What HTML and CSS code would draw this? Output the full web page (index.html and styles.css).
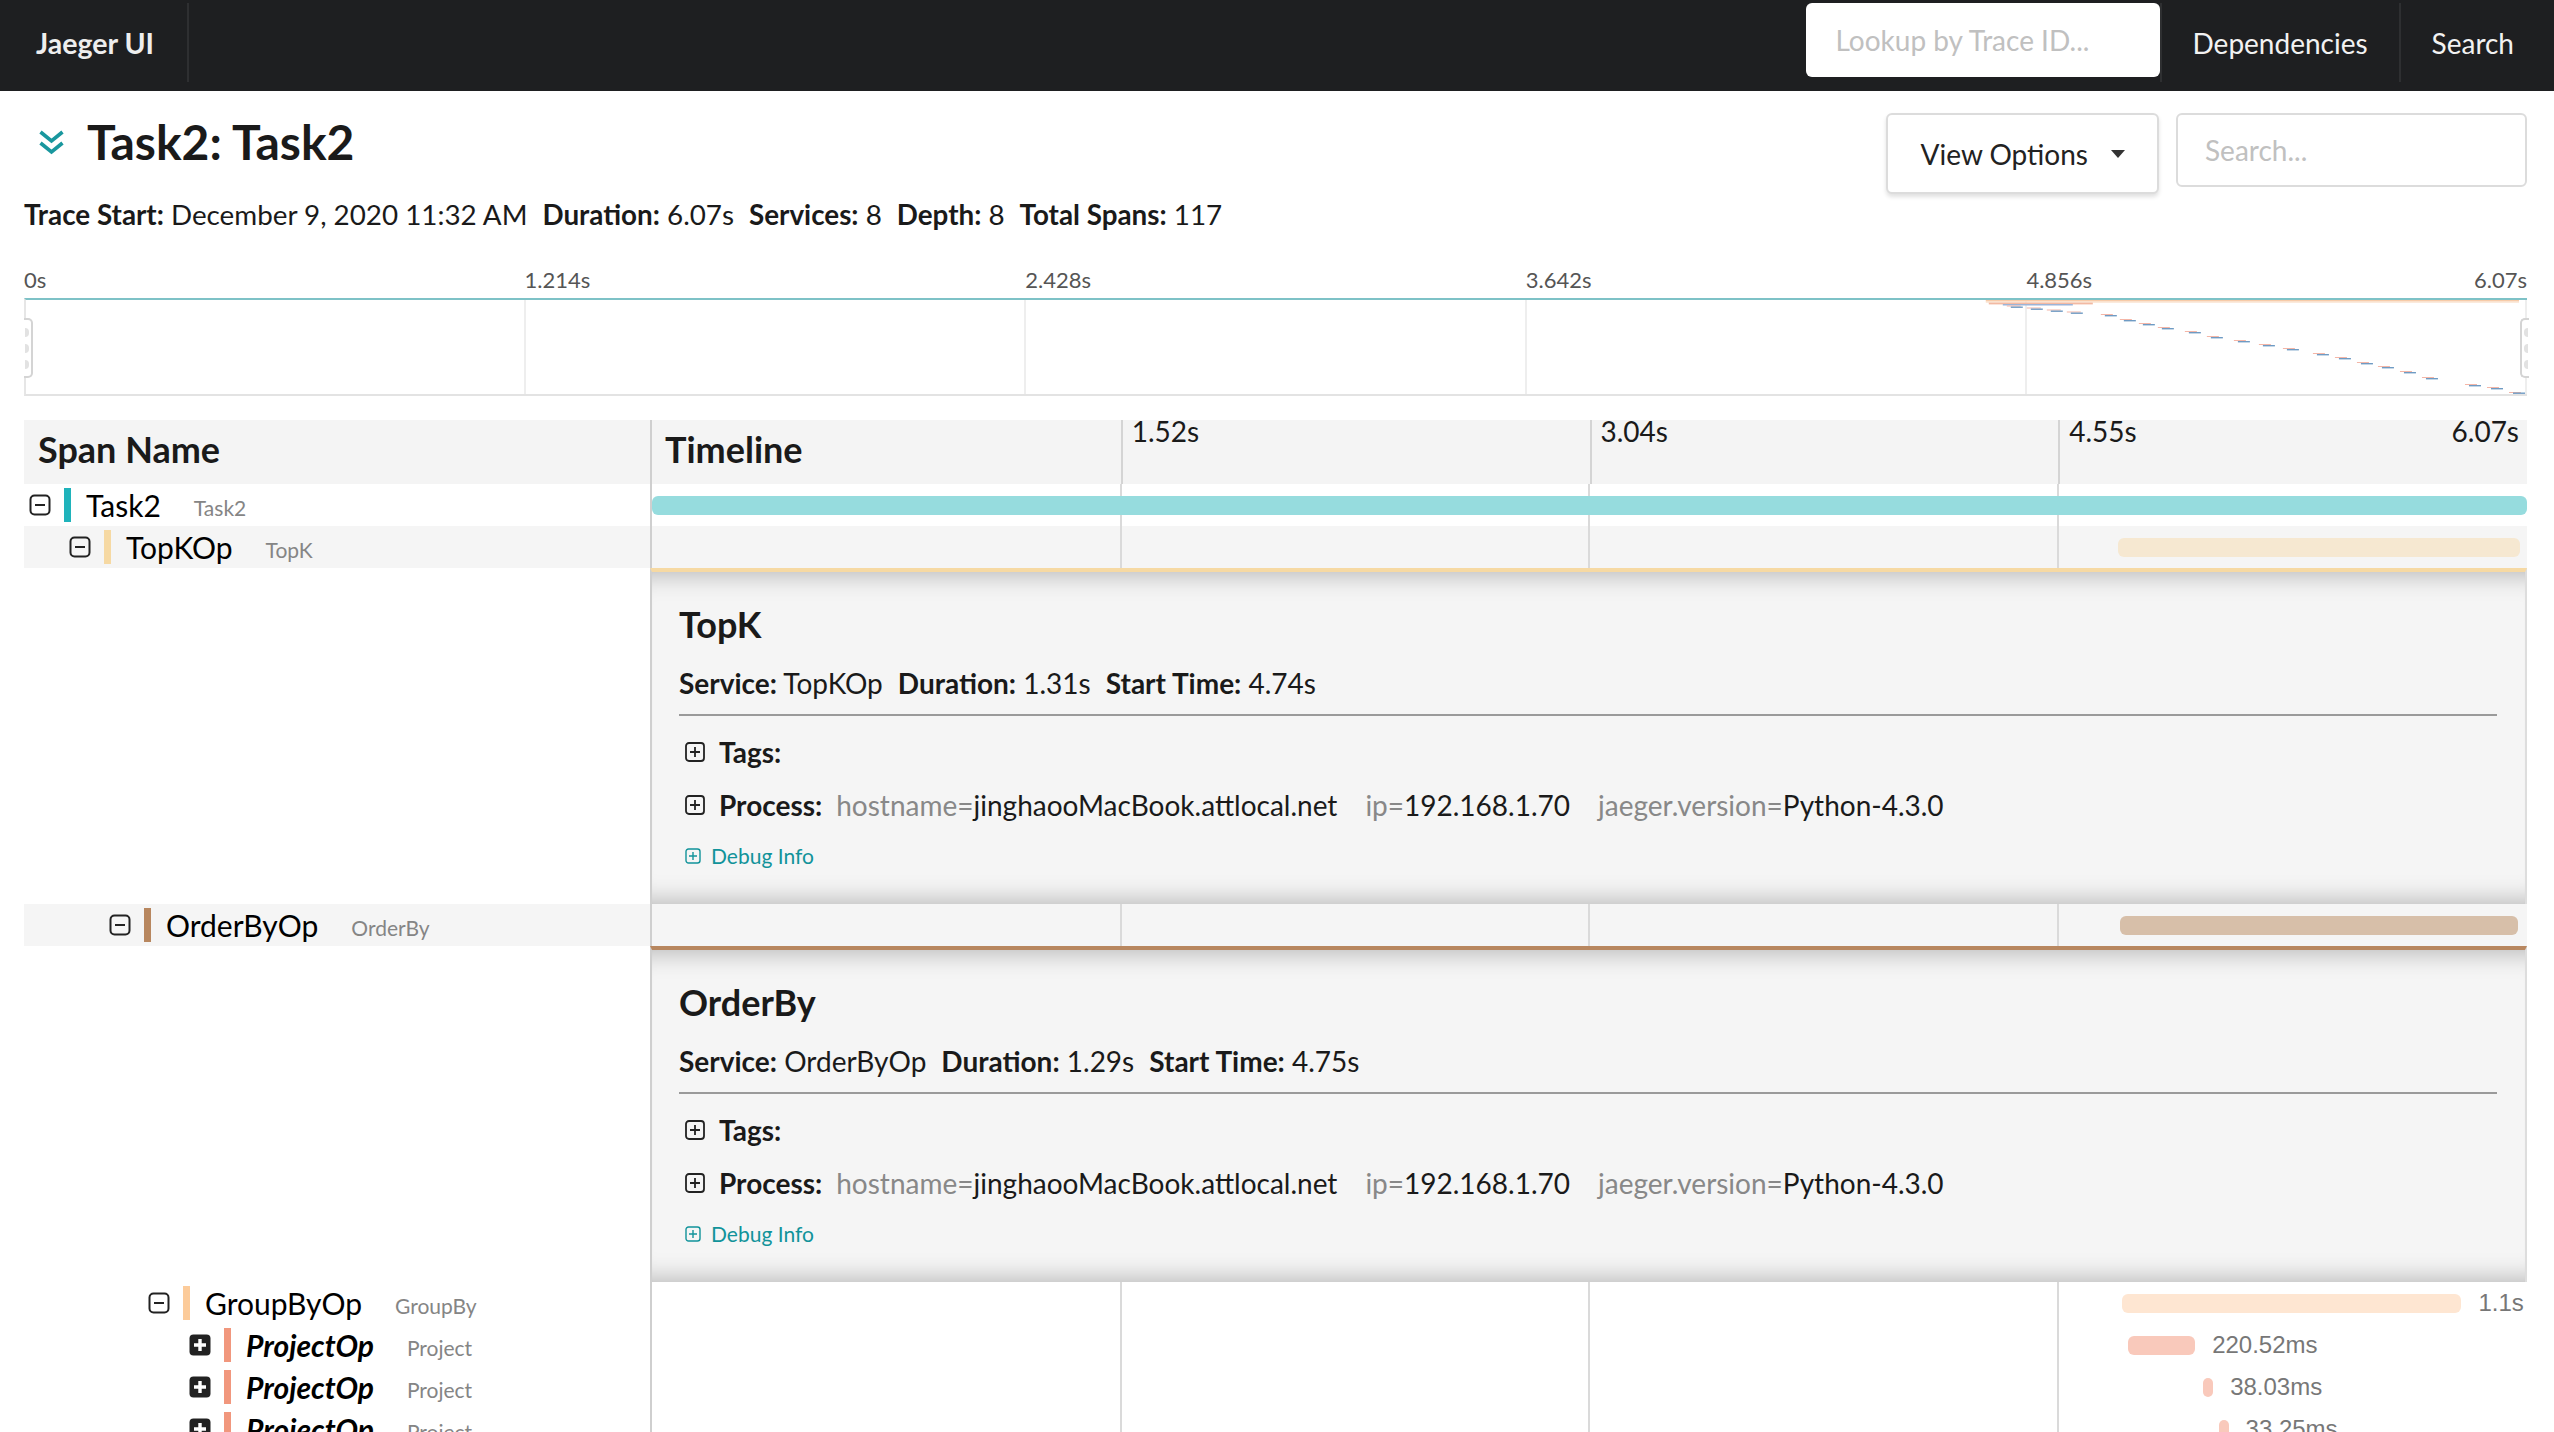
FILE: index.html
```html
<!DOCTYPE html>
<html>
<head>
<meta charset="utf-8">
<title>Jaeger UI</title>
<link rel="stylesheet" href="styles.css">
</head>
<body>
<header class="nav">
  <div class="brand">Jaeger UI</div>
  <div class="lookup"><input class="lookup-input" placeholder="Lookup by Trace ID..."></div>
  <div class="nav-item">Dependencies</div>
  <div class="nav-item last">Search</div>
</header>

<main class="page">
  <div class="title-row">
    <svg class="chev" width="27" height="27" viewBox="0 0 27 27"><path d="M2.5 3 L13.5 12 L24.5 3 M2.5 14 L13.5 23 L24.5 14" fill="none" stroke="#19979e" stroke-width="3.6" stroke-linejoin="miter"/></svg>
    <h1 class="title">Task2: Task2</h1>
    <button class="view-options">View Options <svg class="caret" width="16" height="10" viewBox="0 0 16 10"><path d="M1 1 H15 L8 9 Z" fill="#333"/></svg></button>
    <input class="search" placeholder="Search...">
  </div>

  <div class="overview">
    <span class="ov"><b>Trace Start:</b> December 9, 2020 11:32 AM</span>
    <span class="ov"><b>Duration:</b> 6.07s</span>
    <span class="ov"><b>Services:</b> 8</span>
    <span class="ov"><b>Depth:</b> 8</span>
    <span class="ov"><b>Total Spans:</b> 117</span>
  </div>

  <div class="minimap">
    <div class="mm-labels">
      <div>0s</div><div>1.214s</div><div>2.428s</div><div>3.642s</div><div class="mm-last"><span>4.856s</span><span>6.07s</span></div>
    </div>
    <div class="mm-box">
      <div class="mm-col"></div><div class="mm-col"></div><div class="mm-col"></div><div class="mm-col"></div><div class="mm-col"></div>
      <svg class="mm-spans" viewBox="0 0 2500 94" preserveAspectRatio="none">
        <rect x="1959" y="0" width="533" height="1.4" fill="#f7cba9"/>
        <rect x="1959" y="1.4" width="533" height="1.2" fill="#f8dcc6"/>
        <rect x="1962" y="2.6" width="104" height="1.8" fill="#f2b9a2"/>
        <rect x="1976" y="4" width="70" height="1.5" fill="#9cb4d8"/>
        <g fill="#f4b6a7">
          <rect x="1980" y="5.5" width="14" height="1"/><rect x="2000" y="7.5" width="14" height="1"/><rect x="2020" y="9.5" width="14" height="1"/><rect x="2040" y="11.5" width="14" height="1"/>
          <rect x="2074" y="14" width="12" height="1"/><rect x="2093" y="19" width="12" height="1"/><rect x="2112" y="23" width="12" height="1"/><rect x="2131" y="27" width="12" height="1"/><rect x="2158" y="31" width="12" height="1"/><rect x="2180" y="36" width="12" height="1"/><rect x="2207" y="40" width="12" height="1"/><rect x="2232" y="44" width="12" height="1"/><rect x="2256" y="48" width="12" height="1"/><rect x="2286" y="53" width="12" height="1"/><rect x="2308" y="57" width="12" height="1"/><rect x="2330" y="62" width="12" height="1"/><rect x="2351" y="66" width="12" height="1"/><rect x="2373" y="71" width="12" height="1"/><rect x="2395" y="77" width="12" height="1"/><rect x="2438" y="84" width="12" height="1"/><rect x="2460" y="87" width="12" height="1"/><rect x="2482" y="92" width="12" height="1"/>
        </g>
        <g fill="#6f9bc4">
          <rect x="1984" y="6.5" width="12" height="1.4"/><rect x="2004" y="8.5" width="12" height="1.4"/><rect x="2024" y="10.5" width="12" height="1.4"/><rect x="2044" y="12.5" width="12" height="1.4"/>
          <rect x="2078" y="15" width="12" height="1.4"/><rect x="2097" y="20" width="12" height="1.4"/><rect x="2116" y="24" width="12" height="1.4"/><rect x="2135" y="28" width="12" height="1.4"/><rect x="2162" y="32" width="12" height="1.4"/><rect x="2184" y="37" width="12" height="1.4"/><rect x="2211" y="41" width="12" height="1.4"/><rect x="2236" y="45" width="12" height="1.4"/><rect x="2260" y="49" width="12" height="1.4"/><rect x="2290" y="54" width="12" height="1.4"/><rect x="2312" y="58" width="12" height="1.4"/><rect x="2334" y="63" width="12" height="1.4"/><rect x="2355" y="67" width="12" height="1.4"/><rect x="2377" y="72" width="12" height="1.4"/><rect x="2399" y="78" width="12" height="1.4"/><rect x="2442" y="85" width="12" height="1.4"/><rect x="2464" y="88" width="12" height="1.4"/><rect x="2486" y="92.5" width="12" height="1.4"/>
        </g>
      </svg>
      <div class="mm-handle left"><i></i><i></i><i></i></div>
      <div class="mm-handle right"><i></i><i></i><i></i></div>
    </div>
  </div>

  <section class="trace">
    <div class="th">
      <div class="th-name">Span Name</div>
      <div class="th-tl">
        <div class="th-q"><span class="th-title">Timeline</span></div>
        <div class="th-q sep"><span class="tick">1.52s</span></div>
        <div class="th-q sep"><span class="tick">3.04s</span></div>
        <div class="th-q sep q-last"><span class="tick">4.55s</span><span class="tick">6.07s</span></div>
      </div>
    </div>

    <div class="row">
      <div class="name-cell d0">
        <svg class="tog" width="22" height="22" viewBox="0 0 22 22"><rect x="1.5" y="1.5" width="19" height="19" rx="4" fill="none" stroke="#222" stroke-width="2"/><path d="M6 11h10" stroke="#222" stroke-width="2"/></svg>
        <span class="cbar" style="background:#1fb3bb"></span>
        <span class="sname">Task2</span><span class="svc">Task2</span>
      </div>
      <div class="tl-cell"><span class="bar" style="margin-left:0%;width:100%;background:#96dcde"></span></div>
    </div>

    <div class="row hl">
      <div class="name-cell d1">
        <svg class="tog" width="22" height="22" viewBox="0 0 22 22"><rect x="1.5" y="1.5" width="19" height="19" rx="4" fill="none" stroke="#222" stroke-width="2"/><path d="M6 11h10" stroke="#222" stroke-width="2"/></svg>
        <span class="cbar" style="background:#f6d9a3"></span>
        <span class="sname">TopKOp</span><span class="svc">TopK</span>
      </div>
      <div class="tl-cell"><span class="bar" style="margin-left:78.2%;width:21.4%;background:#f6e8d1"></span></div>
    </div>

    <div class="detail-row">
      <div class="detail-left"></div>
      <div class="detail" style="border-top-color:#f6d9a3">
        <div class="d-title">TopK</div>
        <div class="d-meta"><span class="m"><b>Service:</b> TopKOp</span><span class="m"><b>Duration:</b> 1.31s</span><span class="m"><b>Start Time:</b> 4.74s</span></div>
        <hr class="d-hr">
        <div class="d-line">
          <svg class="plus" width="20" height="20" viewBox="0 0 20 20"><rect x="1" y="1" width="18" height="18" rx="3" fill="none" stroke="#222" stroke-width="1.8"/><path d="M10 5v10M5 10h10" stroke="#222" stroke-width="1.8"/></svg>
          <b>Tags:</b>
        </div>
        <div class="d-line">
          <svg class="plus" width="20" height="20" viewBox="0 0 20 20"><rect x="1" y="1" width="18" height="18" rx="3" fill="none" stroke="#222" stroke-width="1.8"/><path d="M10 5v10M5 10h10" stroke="#222" stroke-width="1.8"/></svg>
          <b>Process:</b>
          <span class="kv"><span class="k">hostname=</span>jinghaooMacBook.attlocal.net</span>
          <span class="kv"><span class="k">ip=</span>192.168.1.70</span>
          <span class="kv"><span class="k">jaeger.version=</span>Python-4.3.0</span>
        </div>
        <div class="d-debug">
          <svg class="plus-s" width="16" height="16" viewBox="0 0 16 16"><rect x="1" y="1" width="14" height="14" rx="2.5" fill="none" stroke="#11939a" stroke-width="1.4"/><path d="M8 4v8M4 8h8" stroke="#11939a" stroke-width="1.4"/></svg>
          Debug Info
        </div>
      </div>
    </div>

    <div class="row hl">
      <div class="name-cell d2">
        <svg class="tog" width="22" height="22" viewBox="0 0 22 22"><rect x="1.5" y="1.5" width="19" height="19" rx="4" fill="none" stroke="#222" stroke-width="2"/><path d="M6 11h10" stroke="#222" stroke-width="2"/></svg>
        <span class="cbar" style="background:#b8875f"></span>
        <span class="sname">OrderByOp</span><span class="svc">OrderBy</span>
      </div>
      <div class="tl-cell"><span class="bar" style="margin-left:78.3%;width:21.2%;background:#d7bfa9"></span></div>
    </div>

    <div class="detail-row">
      <div class="detail-left"></div>
      <div class="detail" style="border-top-color:#b8875f">
        <div class="d-title">OrderBy</div>
        <div class="d-meta"><span class="m"><b>Service:</b> OrderByOp</span><span class="m"><b>Duration:</b> 1.29s</span><span class="m"><b>Start Time:</b> 4.75s</span></div>
        <hr class="d-hr">
        <div class="d-line">
          <svg class="plus" width="20" height="20" viewBox="0 0 20 20"><rect x="1" y="1" width="18" height="18" rx="3" fill="none" stroke="#222" stroke-width="1.8"/><path d="M10 5v10M5 10h10" stroke="#222" stroke-width="1.8"/></svg>
          <b>Tags:</b>
        </div>
        <div class="d-line">
          <svg class="plus" width="20" height="20" viewBox="0 0 20 20"><rect x="1" y="1" width="18" height="18" rx="3" fill="none" stroke="#222" stroke-width="1.8"/><path d="M10 5v10M5 10h10" stroke="#222" stroke-width="1.8"/></svg>
          <b>Process:</b>
          <span class="kv"><span class="k">hostname=</span>jinghaooMacBook.attlocal.net</span>
          <span class="kv"><span class="k">ip=</span>192.168.1.70</span>
          <span class="kv"><span class="k">jaeger.version=</span>Python-4.3.0</span>
        </div>
        <div class="d-debug">
          <svg class="plus-s" width="16" height="16" viewBox="0 0 16 16"><rect x="1" y="1" width="14" height="14" rx="2.5" fill="none" stroke="#11939a" stroke-width="1.4"/><path d="M8 4v8M4 8h8" stroke="#11939a" stroke-width="1.4"/></svg>
          Debug Info
        </div>
      </div>
    </div>

    <div class="row">
      <div class="name-cell d3">
        <svg class="tog" width="22" height="22" viewBox="0 0 22 22"><rect x="1.5" y="1.5" width="19" height="19" rx="4" fill="none" stroke="#222" stroke-width="2"/><path d="M6 11h10" stroke="#222" stroke-width="2"/></svg>
        <span class="cbar" style="background:#fccb9a"></span>
        <span class="sname">GroupByOp</span><span class="svc">GroupBy</span>
      </div>
      <div class="tl-cell"><span class="bar" style="margin-left:78.4%;width:18.1%;background:#fee6d2"></span><span class="blabel">1.1s</span></div>
    </div>

    <div class="row">
      <div class="name-cell d4">
        <svg class="tog" width="22" height="22" viewBox="0 0 22 22"><rect x="0.5" y="0.5" width="21" height="21" rx="4" fill="#222"/><path d="M11 5v12M5 11h12" stroke="#fff" stroke-width="3.4"/></svg>
        <span class="cbar" style="background:#f1977d"></span>
        <span class="sname coll">ProjectOp</span><span class="svc">Project</span>
      </div>
      <div class="tl-cell"><span class="bar" style="margin-left:78.7%;width:3.6%;background:#f9c9bb"></span><span class="blabel">220.52ms</span></div>
    </div>

    <div class="row">
      <div class="name-cell d4">
        <svg class="tog" width="22" height="22" viewBox="0 0 22 22"><rect x="0.5" y="0.5" width="21" height="21" rx="4" fill="#222"/><path d="M11 5v12M5 11h12" stroke="#fff" stroke-width="3.4"/></svg>
        <span class="cbar" style="background:#f1977d"></span>
        <span class="sname coll">ProjectOp</span><span class="svc">Project</span>
      </div>
      <div class="tl-cell"><span class="bar" style="margin-left:82.7%;width:0.56%;background:#f9c9bb"></span><span class="blabel">38.03ms</span></div>
    </div>

    <div class="row">
      <div class="name-cell d4">
        <svg class="tog" width="22" height="22" viewBox="0 0 22 22"><rect x="0.5" y="0.5" width="21" height="21" rx="4" fill="#222"/><path d="M11 5v12M5 11h12" stroke="#fff" stroke-width="3.4"/></svg>
        <span class="cbar" style="background:#f1977d"></span>
        <span class="sname coll">ProjectOp</span><span class="svc">Project</span>
      </div>
      <div class="tl-cell"><span class="bar" style="margin-left:83.55%;width:0.5%;background:#f9c9bb"></span><span class="blabel">33.25ms</span></div>
    </div>
  </section>
</main>
</body>
</html>
```

FILE: styles.css
```css
* { box-sizing: border-box; }
html, body { margin: 0; padding: 0; }
body {
  font-family: Lato, "Noto Sans", "Liberation Sans", sans-serif;
  color: #000;
  background: #fff;
  overflow: hidden;
}

/* ---------- top nav ---------- */
.nav {
  height: 91px;
  background: #1e1f21;
  display: flex;
  align-items: stretch;
  color: #fff;
}
.brand {
  display: flex;
  align-items: center;
  margin: 3px 0 9px;
  padding: 0 33px 0 36px;
  border-right: 2px solid #2e2f31;
  font-size: 28.5px;
  font-weight: 700;
  color: #eeeeee;
}
.lookup {
  margin-left: auto;
  padding-top: 3px;
}
.lookup-input {
  width: 354px;
  height: 74px;
  border: none;
  border-radius: 6px;
  background: #fff;
  padding: 0 0 0 30px;
  font-family: Lato, sans-serif;
  font-size: 28px;
  outline: none;
}
.lookup-input::placeholder, .search::placeholder { color: #c0c0c0; }
.nav-item {
  display: flex;
  align-items: center;
  margin: 3px 0 9px;
  padding: 0 31px;
  border-left: 2px solid #2e2f31;
  font-size: 28px;
  color: #f2f2f2;
}
.nav-item.last { padding-right: 40px; }

/* ---------- page ---------- */
.page { padding: 0 27px 0 24px; }

.title-row {
  display: flex;
  align-items: flex-start;
  padding-top: 22px;
}
.chev { margin: 16px 0 0 14px; flex: none; }
.title {
  margin: 0 0 0 22px;
  font-size: 48px;
  font-weight: 700;
  line-height: 1.2;
  color: #1a1a1a;
}
.view-options {
  margin-left: auto;
  height: 81px;
  padding: 0 31px 0 33px;
  display: flex;
  align-items: center;
  background: #fff;
  border: 2px solid #dcdcdc;
  border-radius: 6px;
  box-shadow: 0 3px 4px rgba(0, 0, 0, 0.12);
  font-family: Lato, sans-serif;
  font-size: 28px;
  color: #222;
}
.caret { margin-left: 22px; }
.search {
  margin-left: 17px;
  width: 351px;
  height: 74px;
  border: 2px solid #dcdcdc;
  border-radius: 6px;
  padding: 0 0 0 27px;
  font-family: Lato, sans-serif;
  font-size: 28px;
  outline: none;
}

.overview {
  margin-top: 4px;
  display: flex;
  font-size: 27.8px;
  line-height: 1.2;
  color: #1a1a1a;
}
.ov { margin-right: 15px; white-space: pre; }
.ov b { font-weight: 700; }

/* ---------- minimap ---------- */
.minimap { margin-top: 37px; }
.mm-labels {
  display: grid;
  grid-template-columns: repeat(5, 1fr);
  font-size: 22px;
  line-height: 24px;
  color: #555;
  margin-bottom: 6px;
}
.mm-last { display: flex; justify-content: space-between; }
.mm-box {
  position: relative;
  height: 98px;
  display: grid;
  grid-template-columns: repeat(5, 1fr);
  border-top: 2px solid #7ec2c7;
  border-bottom: 2px solid #e3e3e3;
  border-left: 2px solid #e6e6e6;
}
.mm-col { border-right: 2px solid #eeeeee; }
.mm-col:last-child { border-right: 2px solid #e3e3e3; }
.mm-spans { position: absolute; left: 0; top: 0; width: 100%; height: 100%; }
.mm-handle {
  position: absolute;
  top: 18px;
  width: 9px;
  height: 60px;
  background: #fff;
  border: 2px solid #d4d4d4;
  display: flex;
  flex-direction: column;
  justify-content: center;
  gap: 7px;
  padding: 0 1px;
}
.mm-handle.left { left: -2px; border-left: none; border-radius: 0 5px 5px 0; }
.mm-handle.right { right: -2px; border-right: none; border-radius: 5px 0 0 5px; }
.mm-handle i { display: block; width: 4px; height: 9px; border-radius: 0 4px 4px 0; background: #e2e2e2; }
.mm-handle.right i { border-radius: 4px 0 0 4px; margin-left: auto; }

/* ---------- trace table ---------- */
.trace { margin-top: 24px; }
.th {
  display: grid;
  grid-template-columns: 626px 1fr;
  height: 64px;
  background: #f4f4f4;
}
.th-name {
  display: flex;
  align-items: center;
  padding: 0 0 7px 14px;
  font-size: 36px;
  font-weight: 700;
  color: #1a1a1a;
}
.th-tl {
  display: grid;
  grid-template-columns: repeat(4, 1fr);
  border-left: 2px solid #cfcfcf;
}
.th-q { display: flex; align-items: flex-start; }
.th-q.sep { border-left: 2px solid #d4d4d4; }
.th-q.q-last { justify-content: space-between; }
.th-title {
  align-self: center;
  padding: 0 0 7px 13px;
  font-size: 36px;
  font-weight: 700;
  color: #1a1a1a;
}
.tick {
  font-size: 28px;
  line-height: 22px;
  padding: 0 8px 0 9px;
  color: #1a1a1a;
}

.row {
  display: grid;
  grid-template-columns: 626px 1fr;
  height: 42px;
}
.row.hl .name-cell, .row.hl .tl-cell { background-color: #f5f5f5; }

.name-cell {
  display: flex;
  align-items: center;
  padding-left: 5px;
  white-space: nowrap;
}
.name-cell.d1 { padding-left: 45px; }
.name-cell.d2 { padding-left: 85px; }
.name-cell.d3 { padding-left: 124px; }
.name-cell.d4 { padding-left: 165px; }
.tog { flex: none; }
.cbar {
  width: 7px;
  height: 34px;
  margin-left: 13px;
  flex: none;
}
.sname {
  margin-left: 15px;
  font-size: 30px;
  color: #000;
}
.sname.coll { font-weight: 700; font-style: italic; }
.svc {
  margin-left: 33px;
  font-size: 21px;
  color: #858585;
  padding-top: 5px;
}

.tl-cell {
  display: flex;
  align-items: center;
  border-left: 2px solid #cfcfcf;
  background-image: linear-gradient(to right,
    transparent calc(25% - 1px), #dadada calc(25% - 1px), #dadada calc(25% + 1px), transparent calc(25% + 1px),
    transparent calc(50% - 1px), #dadada calc(50% - 1px), #dadada calc(50% + 1px), transparent calc(50% + 1px),
    transparent calc(75% - 1px), #dadada calc(75% - 1px), #dadada calc(75% + 1px), transparent calc(75% + 1px));
}
.bar {
  display: block;
  height: 19px;
  border-radius: 6px;
  min-width: 10px;
  flex: none;
}
.blabel {
  margin-left: 17px;
  font-family: "Liberation Sans", Arial, sans-serif;
  font-size: 24px;
  color: #777;
  white-space: nowrap;
}

/* ---------- detail panel ---------- */
.detail-row {
  display: grid;
  grid-template-columns: 626px 1fr;
}
.detail {
  height: 336px;
  border-top: 4px solid #f6d9a3;
  border-left: 2px solid #cfcfcf;
  border-right: 2px solid #dddddd;
  background: #f5f5f5;
  box-shadow: inset 0 28px 26px -26px rgba(0, 0, 0, 0.28), inset 0 -28px 26px -26px rgba(0, 0, 0, 0.28);
  padding: 30px 28px 0 27px;
}
.d-title {
  font-size: 36px;
  font-weight: 700;
  line-height: 44px;
  color: #1a1a1a;
}
.d-meta {
  margin-top: 21px;
  font-size: 28px;
  line-height: 32px;
  color: #1a1a1a;
  white-space: pre;
  display: flex;
}
.d-meta .m { margin-right: 15px; }
.d-meta b { font-weight: 700; }
.d-hr {
  margin: 15px 0 0;
  border: none;
  height: 2px;
  background: #9a9a9a;
}
.d-line {
  margin-top: 18px;
  display: flex;
  align-items: center;
  font-size: 28px;
  line-height: 36px;
  color: #1a1a1a;
  white-space: nowrap;
}
.d-line + .d-line { margin-top: 17px; }
.plus { margin: 0 14px 0 6px; flex: none; }
.kv { margin-left: 14px; }
.kv + .kv { margin-left: 28px; }
.k { color: #888; }
.d-debug {
  margin-top: 18px;
  display: flex;
  align-items: center;
  font-size: 21px;
  line-height: 30px;
  color: #11939a;
}
.plus-s { margin: 0 10px 0 6px; }
```
